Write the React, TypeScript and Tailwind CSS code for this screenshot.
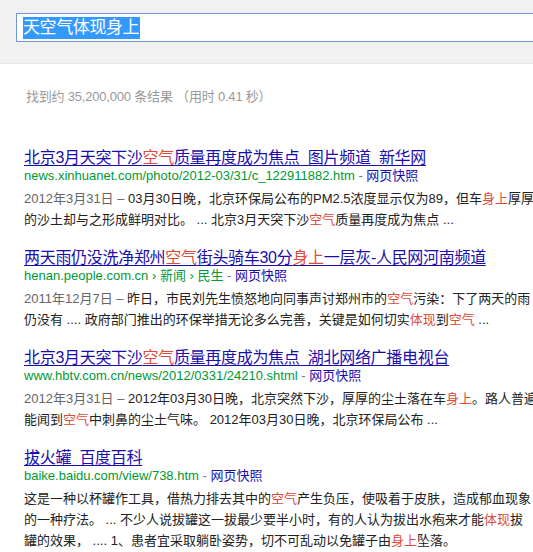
const font = { fontFamily: '"Liberation Sans", Arial, "Noto Sans CJK SC", sans-serif' };

type Seg = string | { hl: string };

function Hl({ parts }: { parts: Seg[] }) {
  return (
    <>
      {parts.map((p, i) =>
        typeof p === "string" ? (
          <span key={i}>{p}</span>
        ) : (
          <span key={i} className="text-[#dd4b39]">
            {p.hl}
          </span>
        )
      )}
    </>
  );
}

type Result = {
  title: Seg[];
  url: string[];
  date?: string;
  lines: Seg[][];
};

const results: Result[] = [
  {
    title: ["北京3月天突下沙", { hl: "空气" }, "质量再度成为焦点\u00a0\u00a0图片频道\u00a0\u00a0新华网"],
    url: ["news.xinhuanet.com/photo/2012-03/31/c_122911882.htm"],
    date: "2012年3月31日 – ",
    lines: [
      ["03月30日晚，北京环保局公布的PM2.5浓度显示仅为89，但车", { hl: "身上" }, "厚厚的沙"],
      ["的沙土却与之形成鲜明对比。 ... 北京3月天突下沙", { hl: "空气" }, "质量再度成为焦点 ..."],
    ],
  },
  {
    title: ["两天雨仍没洗净郑州", { hl: "空气" }, "街头骑车30分", { hl: "身上" }, "一层灰-人民网河南频道"],
    url: ["henan.people.com.cn", "新闻", "民生"],
    date: "2011年12月7日 – ",
    lines: [
      ["昨日，市民刘先生愤怒地向同事声讨郑州市的", { hl: "空气" }, "污染：下了两天的雨"],
      ["仍没有 .... 政府部门推出的环保举措无论多么完善，关键是如何切实", { hl: "体现" }, "到", { hl: "空气" }, " ..."],
    ],
  },
  {
    title: ["北京3月天突下沙", { hl: "空气" }, "质量再度成为焦点\u00a0\u00a0湖北网络广播电视台"],
    url: ["www.hbtv.com.cn/news/2012/0331/24210.shtml"],
    date: "2012年3月31日 – ",
    lines: [
      ["2012年03月30日晚，北京突然下沙，厚厚的尘土落在车", { hl: "身上" }, "。路人普遍"],
      ["能闻到", { hl: "空气" }, "中刺鼻的尘土气味。 2012年03月30日晚，北京环保局公布 ..."],
    ],
  },
  {
    title: ["拔火罐\u00a0\u00a0百度百科"],
    url: ["baike.baidu.com/view/738.htm"],
    lines: [
      ["这是一种以杯罐作工具，借热力排去其中的", { hl: "空气" }, "产生负压，使吸着于皮肤，造成郁血现象"],
      ["的一种疗法。 ... 不少人说拔罐这一拔最少要半小时，有的人认为拔出水疱来才能", { hl: "体现" }, "拔"],
      ["罐的效果， .... 1、患者宜采取躺卧姿势，切不可乱动以免罐子由", { hl: "身上" }, "坠落。"],
    ],
  },
];

export default function App() {
  return (
    <div className="w-[533px] h-[552px] overflow-hidden bg-white" style={font}>
      {/* search bar */}
      <div className="h-[64px] bg-[#f1f1f1] border-b border-[#e5e5e5] pt-[13px] pl-4">
        <div className="h-[29px] w-[600px] bg-white border border-[#6d9ad6] flex items-center pl-[6px]">
          <span className="bg-[#3399ff] text-white text-[17px] leading-[22px] tracking-[-0.4px] pr-[1px]">
            天空气体现身上
          </span>
        </div>
      </div>

      {/* stats */}
      <div className="pl-[26px] pt-[23px] text-[13px] leading-[20px] text-[#999] whitespace-nowrap tracking-[-0.2px]">
        找到约 35,200,000 条结果 （用时 0.41 秒）
      </div>

      {/* results */}
      <div className="pl-6 pt-[41px] flex flex-col gap-[18px]">
        {results.map((r, i) => (
          <div key={i} className="whitespace-nowrap">
            <div className="text-[16px] leading-[19px] tracking-[-0.3px] text-[#1a0dab] underline underline-offset-[2px]">
              <Hl parts={r.title} />
            </div>
            <div className="text-[13px] leading-[17px] text-[#009933]">
              {r.url.map((u, j) => (
                <span key={j}>
                  {j > 0 && <span className="text-[#009933]"> › </span>}
                  {u}
                </span>
              ))}
              <span className="text-[#777]"> - </span>
              <span className="text-[#1a0dab]">网页快照</span>
            </div>
            <div className="mt-[4px] text-[13px] leading-[21px] text-[#222]">
              {r.lines.map((l, j) => (
                <div key={j}>
                  {j === 0 && r.date && <span className="text-[#666]">{r.date}</span>}
                  <Hl parts={l} />
                </div>
              ))}
            </div>
          </div>
        ))}
      </div>
    </div>
  );
}
